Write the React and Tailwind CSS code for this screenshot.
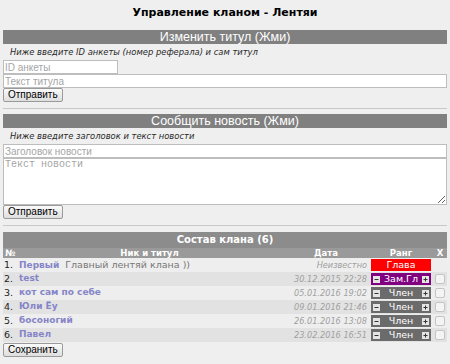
import React from 'react';

const verdana = "font-['DejaVu_Sans',Verdana,sans-serif]";
const arial = "font-['Liberation_Sans',Arial,sans-serif]";

const members = [
  { n: 1, name: 'Первый', title: 'Главный лентяй клана ))', date: 'Неизвестно', rank: 'Глава' },
  { n: 2, name: 'test', date: '30.12.2015 22:28', rank: 'Зам.Гл' },
  { n: 3, name: 'кот сам по себе', date: '05.01.2016 19:02', rank: 'Член' },
  { n: 4, name: 'Юли Ёу', date: '09.01.2016 21:46', rank: 'Член' },
  { n: 5, name: 'босоногий', date: '26.01.2016 13:08', rank: 'Член' },
  { n: 6, name: 'Павел', date: '23.02.2016 16:51', rank: 'Член' },
];

const Bar = ({ children }) => (
  <div className={`${arial} h-[14px] bg-[#808080] text-center text-[12.5px] leading-[14px] text-white`}>{children}</div>
);

const Hint = ({ children }) => (
  <div className="h-[16px] pl-[7px] text-[8.4px] italic leading-[16px] text-[#2a2a2a]">{children}</div>
);

const SendButton = ({ label = 'Отправить' }) => (
  <button
    className={`${arial} block h-[14px] rounded-[2px] border border-[#9a9a9a] bg-gradient-to-b from-[#fafafa] to-[#dedede] px-[4px] text-[10px] leading-[12px] text-black`}
  >
    {label}
  </button>
);

const Square = ({ sign }) => (
  <span className="flex h-[7px] w-[7px] items-center justify-center bg-[#e4e4e4]">
    <svg width="5" height="5" viewBox="0 0 5 5">
      <rect x="0.5" y="2" width="4" height="1" fill="#333" />
      {sign === '+' && <rect x="2" y="0.5" width="1" height="4" fill="#333" />}
    </svg>
  </span>
);

const Rank = ({ rank }) => {
  if (rank === 'Глава') {
    return (
      <div className="mx-[2px] h-[12px] bg-[#ff0000] text-center text-[9.5px] leading-[12px] text-white">Глава</div>
    );
  }
  const bg = rank === 'Зам.Гл' ? 'bg-[#800080]' : 'bg-[#6b6b6b]';
  return (
    <div className={`mx-[2px] flex h-[12px] items-center justify-between px-[2px] ${bg} text-[9.5px] leading-[12px] text-white`}>
      <Square sign="-" />
      <span>{rank}</span>
      <Square sign="+" />
    </div>
  );
};

const cols = 'grid-cols-[13px_1fr_86px_64px_14px]';

export default function App() {
  return (
    <div className={`${verdana} min-h-[364px] w-[450px] bg-[#efefef] px-[3px] text-black`}>
      <h1 className="h-[30px] pt-[5px] text-center text-[11px] font-bold leading-[16px]">Управление кланом - Лентяи</h1>

      <Bar>Изменить титул (Жми)</Bar>
      <Hint>Ниже введите ID анкеты (номер реферала) и сам титул</Hint>
      <div className={arial}>
        <input
          placeholder="ID анкеты"
          className="block h-[14px] w-[115px] border border-[#bdbdbd] bg-white px-[1px] text-[10px] leading-[12px] outline-none placeholder:text-[#a5a5a5]"
        />
        <input
          placeholder="Текст титула"
          className="block h-[14px] w-full border border-[#bdbdbd] bg-white px-[1px] text-[10px] leading-[12px] outline-none placeholder:text-[#a5a5a5]"
        />
      </div>
      <SendButton />
      <div className="mt-[6px] border-t border-[#c8c8c8]" />

      <div className="mt-[5px]">
        <Bar>Сообщить новость (Жми)</Bar>
        <Hint>Ниже введите заголовок и текст новости</Hint>
        <input
          placeholder="Заголовок новости"
          className={`${arial} block h-[14px] w-full border border-[#bdbdbd] bg-white px-[1px] text-[10px] leading-[12px] outline-none placeholder:text-[#a5a5a5]`}
        />
        <textarea
          placeholder="Текст новости"
          className="block h-[47px] w-full resize-y border border-[#bdbdbd] bg-white px-[1px] font-['Liberation_Mono',monospace] text-[10px] leading-[12px] outline-none placeholder:text-[#a5a5a5]"
        />
        <SendButton />
      </div>
      <div className="mt-[6px] border-t border-[#c8c8c8]" />

      <div className="mt-[6px]">
        <div className="h-[16px] bg-[#8c8c8c] text-center text-[10px] font-bold leading-[16px] text-white">Состав клана (6)</div>
        <div className={`grid h-[10px] ${cols} bg-[#9a9a9a] text-[8.5px] font-bold leading-[10px] text-white`}>
          <span className="pl-[2px]">№</span>
          <span className="text-center">Ник и титул</span>
          <span className="text-center">Дата</span>
          <span className="text-center">Ранг</span>
          <span className="text-center">X</span>
        </div>
        {members.map((m) => (
          <div
            key={m.n}
            className={`grid h-[14px] ${cols} items-center whitespace-nowrap ${m.n % 2 === 0 ? 'bg-[#e2e2e2]' : 'bg-[#eeeeee]'}`}
          >
            <span className="pl-[1px] text-[9.5px] text-[#222]">{m.n}.</span>
            <span className="truncate pl-[3px] text-[9px]">
              <span className="font-bold text-[#8585c8]">{m.name}</span>
              {m.title && <span className="ml-[6px] text-[9.5px] text-[#777]">{m.title}</span>}
            </span>
            <span className="flex justify-end pr-[2px] text-[8.2px] italic text-[#a0a0a0]">{m.date}</span>
            <Rank rank={m.rank} />
            <span className="flex justify-center">
              {m.n !== 1 && <span className="h-[10px] w-[10px] rounded-[2px] border border-[#c4c4c4] bg-[#f4f4f4]" />}
            </span>
          </div>
        ))}
        <div className="pt-[1px]">
          <SendButton label="Сохранить" />
        </div>
      </div>
    </div>
  );
}
